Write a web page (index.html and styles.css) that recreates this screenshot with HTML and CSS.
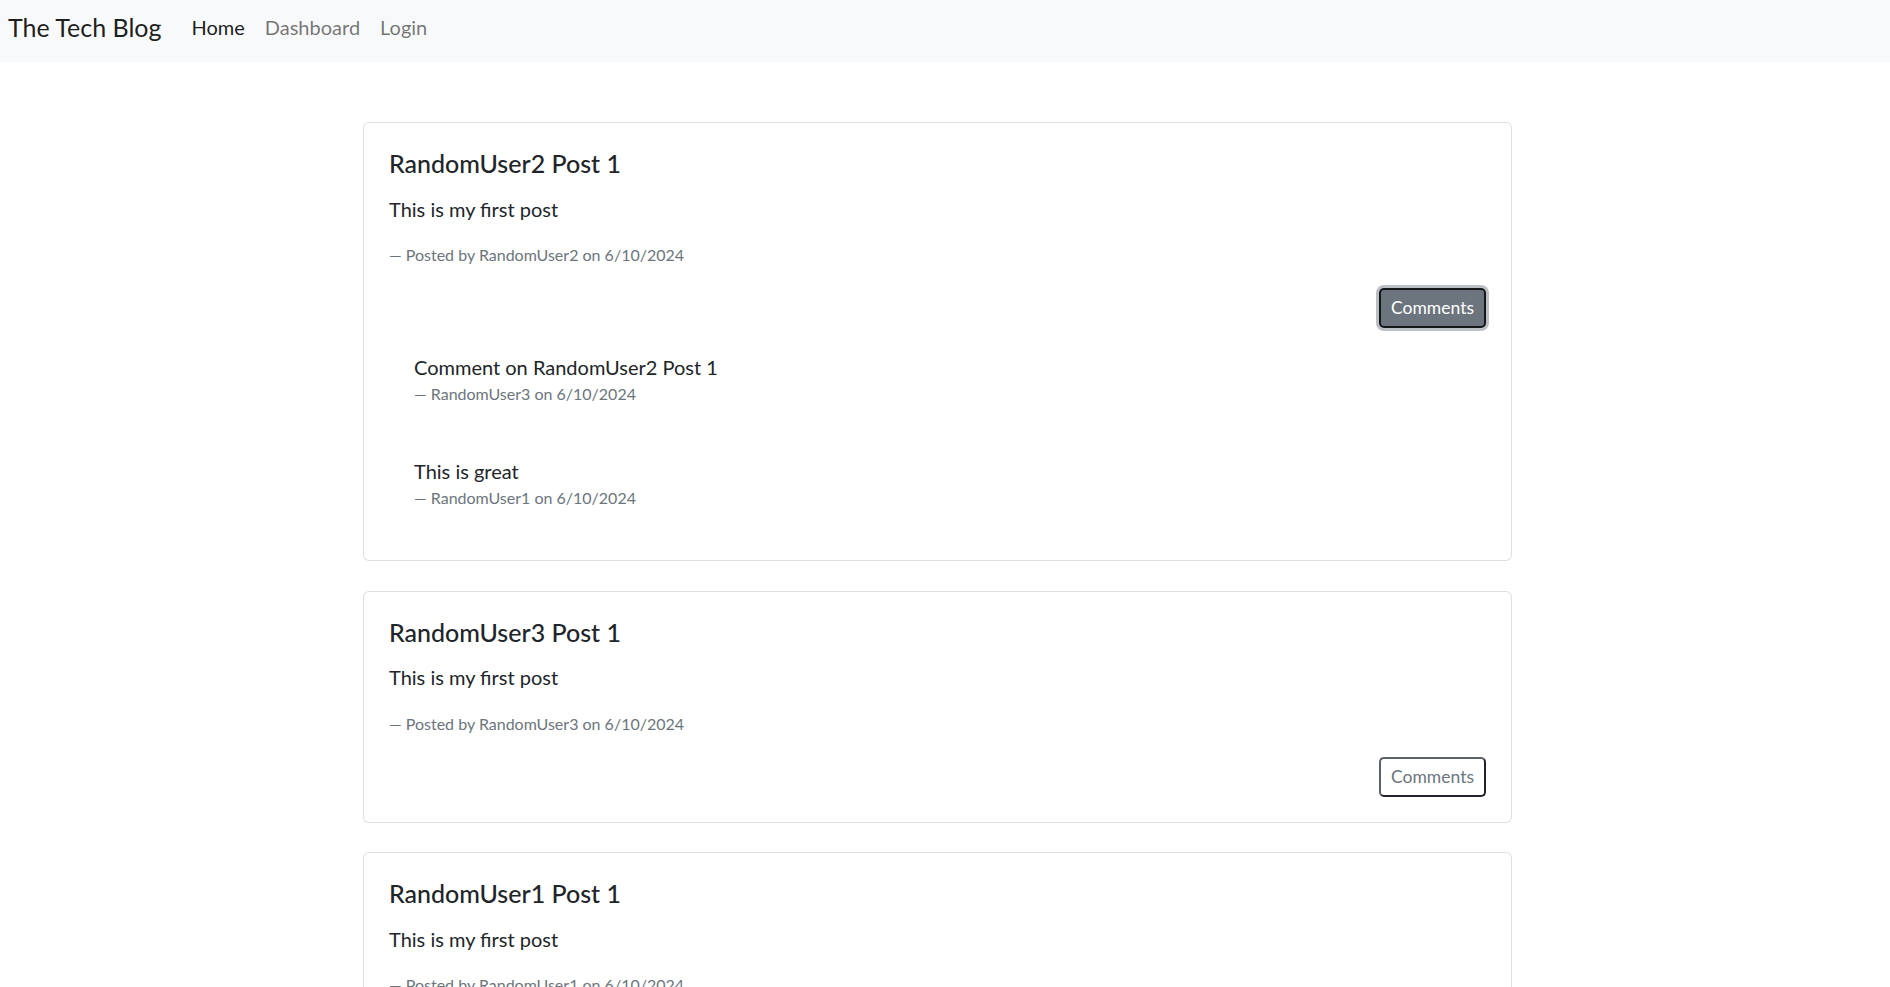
FILE: index.html
```html
<!DOCTYPE html>
<html lang="en">
<head>
<meta charset="utf-8">
<title>The Tech Blog</title>
<link rel="stylesheet" href="styles.css">
</head>
<body>
<div class="page">
  <nav class="navbar">
    <a class="brand" href="#">The Tech Blog</a>
    <ul class="nav">
      <li><a class="nav-link active" href="#">Home</a></li>
      <li><a class="nav-link" href="#">Dashboard</a></li>
      <li><a class="nav-link" href="#">Login</a></li>
    </ul>
  </nav>

  <main class="container">
    <article class="card">
      <div class="card-body">
        <h5 class="card-title">RandomUser2 Post 1</h5>
        <p class="card-text">This is my first post</p>
        <p class="post-meta">— Posted by RandomUser2 on 6/10/2024</p>
        <div class="card-actions">
          <button class="btn-comments is-open" type="button">Comments</button>
        </div>
        <div class="comments">
          <div class="comment">
            <p class="comment-text">Comment on RandomUser2 Post 1</p>
            <p class="comment-meta">— RandomUser3 on 6/10/2024</p>
          </div>
          <div class="comment">
            <p class="comment-text">This is great</p>
            <p class="comment-meta">— RandomUser1 on 6/10/2024</p>
          </div>
        </div>
      </div>
    </article>

    <article class="card">
      <div class="card-body">
        <h5 class="card-title">RandomUser3 Post 1</h5>
        <p class="card-text">This is my first post</p>
        <p class="post-meta">— Posted by RandomUser3 on 6/10/2024</p>
        <div class="card-actions">
          <button class="btn-comments" type="button">Comments</button>
        </div>
      </div>
    </article>

    <article class="card">
      <div class="card-body">
        <h5 class="card-title">RandomUser1 Post 1</h5>
        <p class="card-text">This is my first post</p>
        <p class="post-meta">— Posted by RandomUser1 on 6/10/2024</p>
        <div class="card-actions">
          <button class="btn-comments" type="button">Comments</button>
        </div>
      </div>
    </article>
  </main>
</div>
</body>
</html>
```

FILE: styles.css
```css
html::-webkit-scrollbar {
  width: 3px;
}
html::-webkit-scrollbar-track {
  background: #f1f1f1;
}
html::-webkit-scrollbar-thumb {
  background: #c1c1c1;
}

* {
  box-sizing: border-box;
}

body {
  margin: 0;
  background: #ffffff;
  color: #212529;
  font-family: Lato, "Noto Sans", "Liberation Sans", sans-serif;
  font-size: 20px;
  line-height: 1.5;
}

.page {
  min-height: 2194px;
}

/* Navbar */
.navbar {
  display: flex;
  align-items: flex-start;
  height: 62px;
  padding: 12px 8px 0 8px;
  background: #f8f9fa;
}

.brand {
  font-size: 25px;
  line-height: 30px;
  color: rgba(0, 0, 0, 0.9);
  text-decoration: none;
  margin-right: 20px;
}

.nav {
  display: flex;
  list-style: none;
  margin: 0;
  padding: 0;
}

.nav-link {
  display: block;
  padding: 0 10px;
  font-size: 20px;
  line-height: 30px;
  color: rgba(0, 0, 0, 0.55);
  text-decoration: none;
}

.nav-link.active {
  color: rgba(0, 0, 0, 0.9);
}

/* Posts */
.container {
  width: 1149px;
  margin: 60px 0 0 363px;
  display: flex;
  flex-direction: column;
  gap: 29.5px;
}

.card {
  border: 1px solid rgba(0, 0, 0, 0.125);
  border-radius: 6px;
  background: #fff;
}

.card-body {
  padding: 25px;
}

.card-title {
  margin: 0 0 15.5px;
  font-size: 25px;
  font-weight: 500;
  line-height: 30px;
}

.card-text {
  margin: 0 0 17.4px;
  font-size: 20px;
  line-height: 31.5px;
}

.post-meta {
  margin: 0 0 19.4px;
  font-size: 16px;
  line-height: 26.25px;
  color: #6c757d;
}

.card-actions {
  display: flex;
  justify-content: flex-end;
}

.btn-comments {
  font-family: inherit;
  font-size: 17.5px;
  line-height: 26px;
  padding: 5px 10px;
  color: #6c757d;
  background: #fff;
  border: 2px solid #212529;
  border-left-color: #5c6268;
  border-top-color: #5c6268;
  border-radius: 5px;
  cursor: pointer;
}

.btn-comments.is-open {
  color: #fff;
  background: #6c757d;
  border-color: #15181b;
  box-shadow: 0 0 0 3px #bcc0c4;
}

/* Comments */
.comments {
  margin: 24px 0 25px;
  padding-left: 25px;
  display: flex;
  flex-direction: column;
  gap: 50px;
}

.comment-text {
  margin: 0;
  font-size: 20px;
  line-height: 30px;
}

.comment-meta {
  margin: 0;
  font-size: 16px;
  line-height: 24px;
  color: #6c757d;
}
```
